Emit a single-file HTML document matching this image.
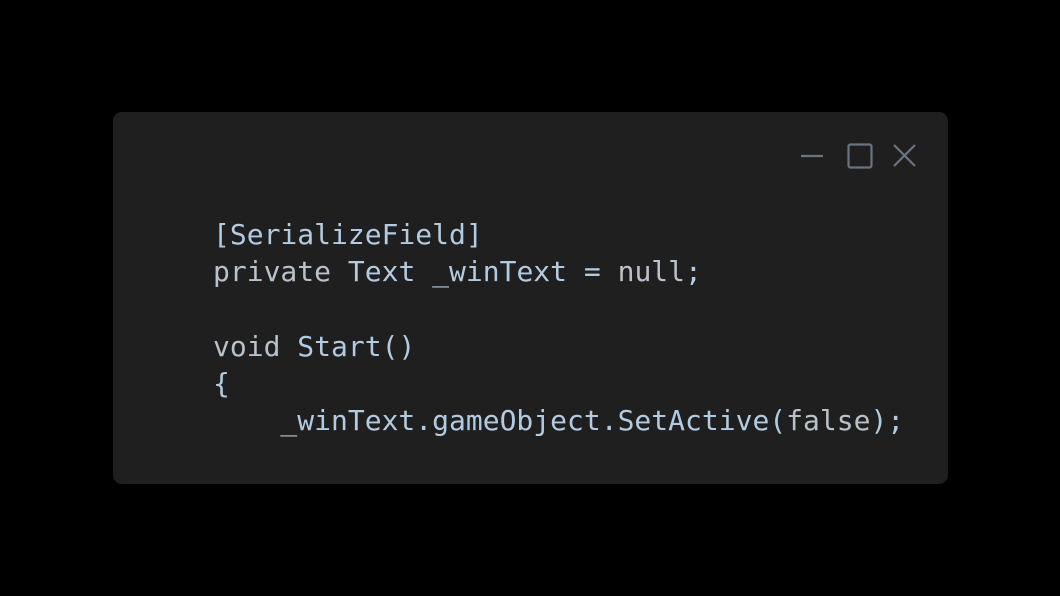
<!DOCTYPE html>
<html><head><meta charset="utf-8"><style>
html,body{margin:0;padding:0;background:#000;width:1060px;height:596px;overflow:hidden}
.p{position:absolute;left:113px;top:112px;width:835px;height:372px;background:#1f1f1f;border-radius:9px}
pre{position:absolute;left:213px;top:216px;margin:0;font-family:"DejaVu Sans Mono","Liberation Mono",monospace;font-size:28px;line-height:37.3px;color:#b3cbe0}
.k{color:#b9c1ca}
svg{position:absolute;left:0;top:0}
</style></head><body>
<div class="p"></div>
<svg width="1060" height="596" fill="none" stroke="#6b7480" stroke-width="2.2">
<line x1="801" y1="156" x2="823" y2="156"/>
<rect x="848.5" y="144.5" width="23" height="23" rx="2"/>
<line x1="894" y1="145" x2="915" y2="166"/><line x1="915" y1="145" x2="894" y2="166"/>
</svg>
<pre>[SerializeField]
<span class="k">private</span> Text _winText = <span class="k">null</span>;

<span class="k">void</span> Start()
{
    _winText.gameObject.SetActive(<span class="k">false</span>);</pre>
</body></html>
